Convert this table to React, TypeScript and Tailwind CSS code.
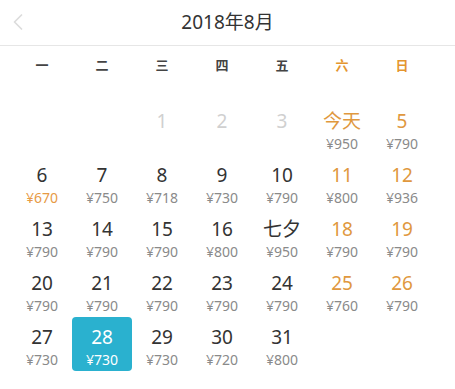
import { ChevronLeft } from "lucide-react";

type Day = {
  label: string;
  price?: string;
  weekend?: boolean;
  disabled?: boolean;
  cheap?: boolean;
  selected?: boolean;
};

const weekdays = ["一", "二", "三", "四", "五", "六", "日"];

const prices: Record<number, string> = {
  4: "950", 5: "790", 6: "670", 7: "750", 8: "718", 9: "730", 10: "790",
  11: "800", 12: "936", 13: "790", 14: "790", 15: "790", 16: "800", 17: "950",
  18: "790", 19: "790", 20: "790", 21: "790", 22: "790", 23: "790", 24: "790",
  25: "760", 26: "790", 27: "730", 28: "730", 29: "730", 30: "720", 31: "800",
};

function buildDays(): (Day | null)[] {
  const cells: (Day | null)[] = [null, null];
  for (let d = 1; d <= 31; d++) {
    const col = (d + 1) % 7; // Aug 1 2018 is Wednesday (index 2)
    cells.push({
      label: d === 4 ? "今天" : d === 17 ? "七夕" : String(d),
      price: prices[d],
      weekend: col === 5 || col === 6,
      disabled: d < 4,
      cheap: d === 6,
      selected: d === 28,
    });
  }
  return cells;
}

function DayCell({ day }: { day: Day | null }) {
  if (!day) return <div className="h-[54px]" />;
  const numColor = day.selected
    ? "text-white"
    : day.disabled
      ? "text-[#d0d0d0]"
      : day.weekend || day.label === "今天"
        ? "text-[#e0983e]"
        : "text-[#333]";
  const priceColor = day.selected
    ? "text-white"
    : day.cheap
      ? "text-[#e79a45]"
      : "text-[#8a8a8a]";
  return (
    <div
      className={
        "flex h-[54px] flex-col items-center pt-[9px] " +
        (day.selected ? "rounded-[4px] bg-[#2ab1cf]" : "")
      }
    >
      <span className={"h-[23px] text-[19px] leading-[23px] " + numColor}>{day.label}</span>
      {day.price && (
        <span className={"mt-[2px] text-[14px] leading-[18px] " + priceColor}>¥{day.price}</span>
      )}
    </div>
  );
}

export default function App() {
  const days = buildDays();
  return (
    <div className="h-[389px] w-[455px] overflow-hidden bg-white font-['Noto_Sans','Noto_Sans_CJK_SC',sans-serif]">
      <header className="relative flex h-[46px] items-center justify-center border-b border-[#e6e6e6]">
        <ChevronLeft
          size={28}
          strokeWidth={1.5}
          className="absolute left-[4px] top-[8px] text-[#dcdcdc]"
        />
        <h1 className="text-[19px] text-[#333]">2018年8月</h1>
      </header>

      <div className="grid h-[40px] grid-cols-[repeat(7,60px)] items-center pl-[12px]">
        {weekdays.map((w, i) => (
          <span
            key={w}
            className={
              "text-center text-[13px] font-bold " +
              (i >= 5 ? "text-[#e4952f]" : "text-[#444]")
            }
          >
            {w}
          </span>
        ))}
      </div>

      <div className="mt-[15px] grid grid-cols-[repeat(7,60px)] pl-[12px]">
        {days.map((d, i) => (
          <DayCell key={i} day={d} />
        ))}
      </div>
    </div>
  );
}
